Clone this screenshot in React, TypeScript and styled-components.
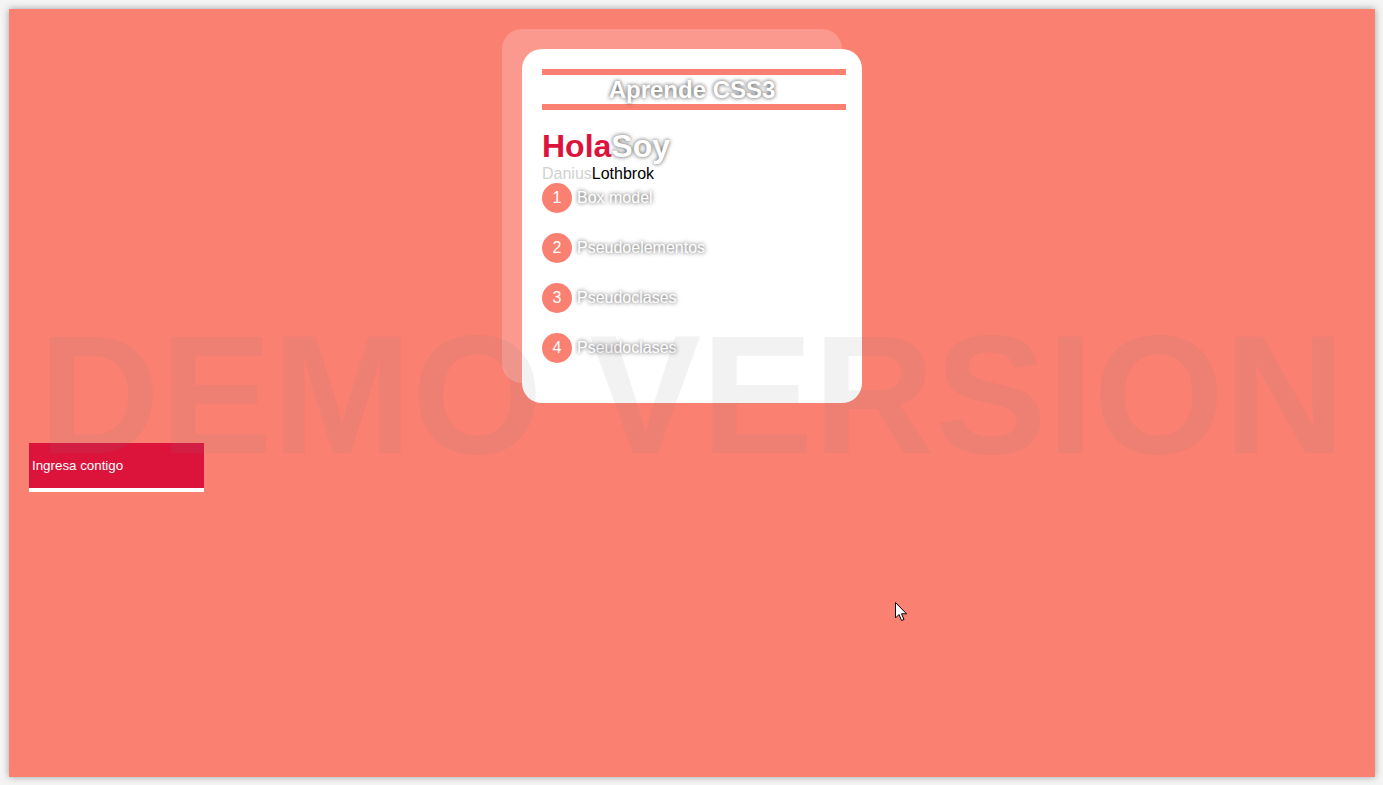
import React from "react";
import styled, { createGlobalStyle } from "styled-components";

const Global = createGlobalStyle`
  html, body { margin: 0; padding: 0; background: #f4f4f4; }
  body { font-family: "Liberation Sans", Arial, sans-serif; }
  * { box-sizing: border-box; }
`;

const Stage = styled.div`
  position: relative;
  margin: 9px;
  width: 1366px;
  height: 768px;
  background: #fa8072;
  box-shadow: 0 0 7px rgba(0, 0, 0, 0.35);
  padding: 40px 20px 0;
  display: flex;
  flex-direction: column;
  overflow: hidden;
`;

const CardWrap = styled.div`
  position: relative;
  align-self: center;
  width: 340px;
`;

const Ghost = styled.div`
  position: absolute;
  left: -20px;
  top: -20px;
  width: 340px;
  height: 100%;
  border-radius: 20px;
  background: rgba(255, 255, 255, 0.2);
`;

const Card = styled.div`
  position: relative;
  background: #fff;
  border-radius: 20px;
  padding: 20px;
  display: flex;
  flex-direction: column;
`;

const Title = styled.h1`
  margin: 0;
  width: 304px;
  padding-right: 4px;
  border-top: 6px solid #fa8072;
  border-bottom: 6px solid #fa8072;
  font-size: 24px;
  font-weight: bold;
  line-height: 29px;
  text-align: center;
  color: #fff;
  text-shadow: 0 0 4px rgba(0, 0, 0, 0.75);
`;

const Greeting = styled.h2`
  margin: 20px 0 0;
  font-size: 32px;
  line-height: 32px;
  font-weight: bold;
`;

const Red = styled.span`
  color: #dc143c;
`;

const Shadowed = styled.span`
  color: #fff;
  text-shadow: 0 0 4px rgba(0, 0, 0, 0.7);
`;

const Name = styled.p`
  margin: 3px 0 0;
  font-size: 16px;
  line-height: 18px;
`;

const Light = styled.span`
  color: #d2d2d2;
  text-shadow: 0 0 2px rgba(255, 255, 255, 0.9);
`;

const Dark = styled.span`
  color: #000;
`;

const List = styled.ul`
  list-style: none;
  margin: 0;
  padding: 0;
  display: flex;
  flex-direction: column;
  gap: 20px;
  padding-bottom: 20px;
`;

const Item = styled.li`
  display: flex;
  align-items: center;
  gap: 5px;
  height: 30px;
  font-size: 16px;
`;

const Num = styled.span`
  width: 30px;
  height: 30px;
  border-radius: 50%;
  background: #fa8072;
  color: #fff;
  display: flex;
  align-items: center;
  justify-content: center;
  font-size: 16px;
`;

const ItemText = styled.span`
  color: #fff;
  text-shadow: 0 0 4px rgba(0, 0, 0, 0.75);
`;

const Button = styled.button`
  margin-top: 40px;
  width: 175px;
  height: 49px;
  border: none;
  border-bottom: 4px solid #fff;
  background: #dc143c;
  color: #fff;
  text-align: left;
  padding: 0 3px;
  font-family: "Liberation Sans", Arial, sans-serif;
  font-size: 13.33px;
  cursor: pointer;
`;

const Watermark = styled.div`
  position: absolute;
  left: 0;
  right: 0;
  top: 302px;
  text-align: center;
  font-family: "Liberation Sans", Arial, sans-serif;
  font-weight: bold;
  font-size: 168px;
  line-height: 1;
  color: rgba(128, 128, 128, 0.1);
  pointer-events: none;
  white-space: nowrap;
`;

const Cursor = styled.svg`
  position: absolute;
  left: 886px;
  top: 593px;
  pointer-events: none;
`;

const items = ["Box model", "Pseudoelementos", "Pseudoclases", "Pseudoclases"];

export default function App() {
  return (
    <>
      <Global />
      <Stage>
        <CardWrap>
          <Ghost />
          <Card>
            <Title>Aprende CSS3</Title>
            <Greeting>
              <Red>Hola</Red>
              <Shadowed>Soy</Shadowed>
            </Greeting>
            <Name>
              <Light>Danius</Light>
              <Dark>Lothbrok</Dark>
            </Name>
            <List>
              {items.map((t, i) => (
                <Item key={i}>
                  <Num>{i + 1}</Num>
                  <ItemText>{t}</ItemText>
                </Item>
              ))}
            </List>
          </Card>
        </CardWrap>
        <Button>Ingresa contigo</Button>
        <Watermark>DEMO VERSION</Watermark>
        <Cursor width="14" height="22" viewBox="0 0 14 22">
          <path
            d="M0.5 0.5 L0.5 16 L4 12.5 L6.5 18.5 L9 17.5 L6.5 11.8 L11.5 11.8 Z"
            fill="#fff"
            stroke="#000"
            strokeWidth="1"
            strokeLinejoin="miter"
          />
        </Cursor>
      </Stage>
    </>
  );
}
